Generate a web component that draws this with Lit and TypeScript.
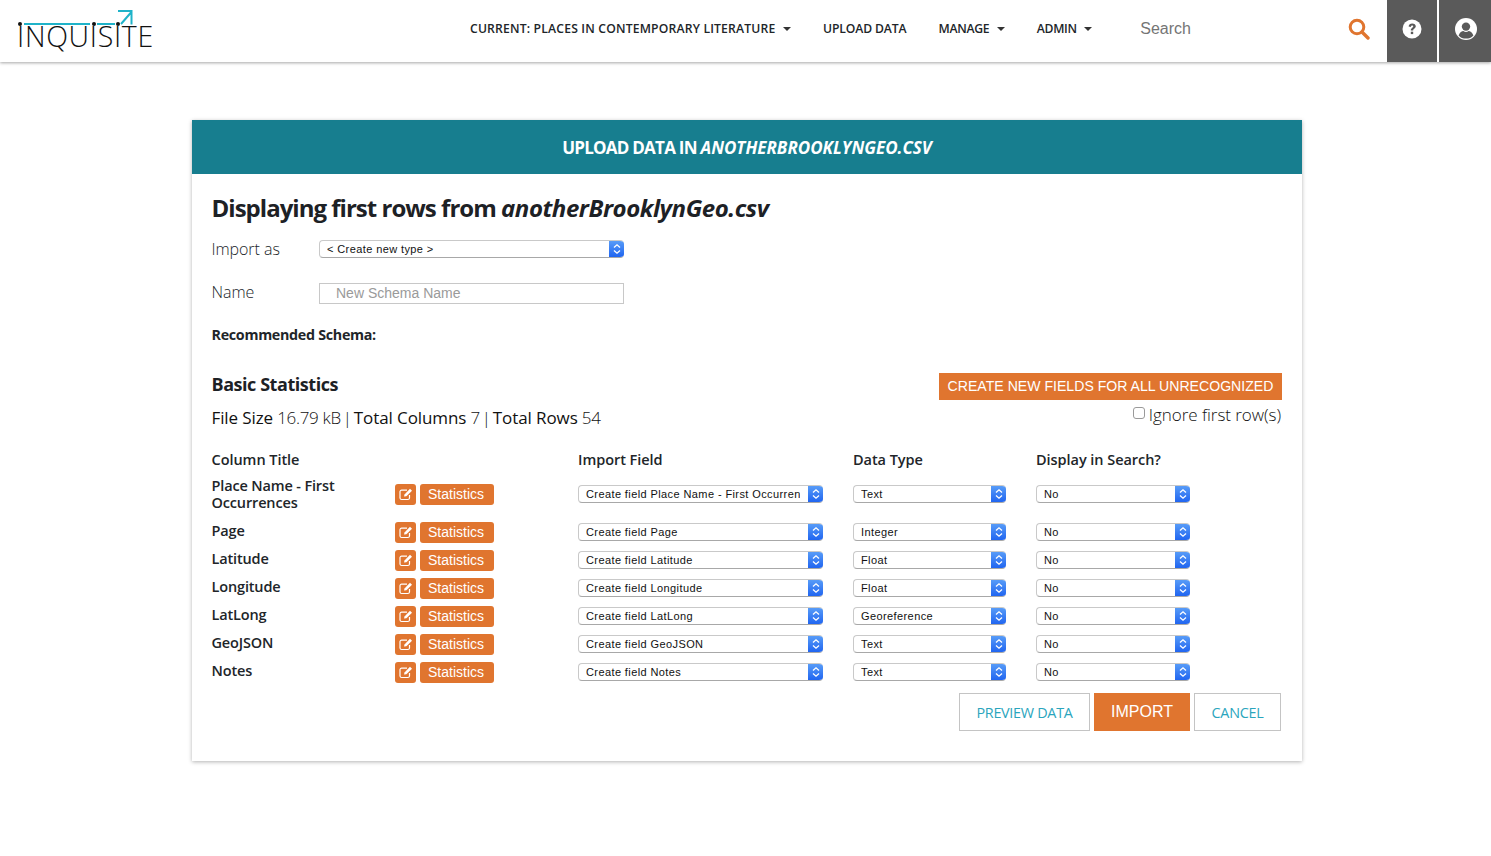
import { LitElement, html, css, svg } from 'lit';
import { customElement } from 'lit/decorators.js';

type Row = { title: string; field: string; type: string };

const rows: Row[] = [
  { title: 'Place Name - First Occurrences', field: 'Create field Place Name - First Occurrences', type: 'Text' },
  { title: 'Page', field: 'Create field Page', type: 'Integer' },
  { title: 'Latitude', field: 'Create field Latitude', type: 'Float' },
  { title: 'Longitude', field: 'Create field Longitude', type: 'Float' },
  { title: 'LatLong', field: 'Create field LatLong', type: 'Georeference' },
  { title: 'GeoJSON', field: 'Create field GeoJSON', type: 'Text' },
  { title: 'Notes', field: 'Create field Notes', type: 'Text' },
];

const chevrons = svg`<svg width="8" height="12" viewBox="0 0 8 12" fill="none" stroke="#fff" stroke-width="1.3"><path d="M1 4.5 L4 1.8 L7 4.5"/><path d="M1 7.5 L4 10.2 L7 7.5"/></svg>`;

const editIcon = svg`<svg width="14" height="14" viewBox="0 0 14 14" fill="none" stroke="#fff" stroke-width="1.2"><path d="M10.5 8 V11 A1.6 1.6 0 0 1 8.9 12.5 H2.6 A1.6 1.6 0 0 1 1 11 V4.8 A1.6 1.6 0 0 1 2.6 3.2 H8"/><path d="M5 9.6 L5.5 7.4 L11 1.8 L13 3.8 L7.4 9.2 Z" fill="#fff" stroke="none"/></svg>`;

@customElement('app-root')
export class AppRoot extends LitElement {
  static styles = css`
    :host {
      display: block;
      min-height: 856px;
      background: #fff;
      font-family: 'Open Sans', 'Noto Sans', sans-serif;
      color: #212529;
    }
    .nav {
      height: 62px;
      display: flex;
      align-items: stretch;
      box-shadow: 0 1px 3px rgba(0, 0, 0, 0.35);
      position: relative;
      background: #fff;
    }
    .logo {
      position: relative;
      width: 470px;
      flex: none;
    }
    .logo span {
      position: absolute;
      left: 17px;
      top: 18px;
      font: 300 28.5px/36px 'Open Sans', sans-serif;
      letter-spacing: 0.7px;
      color: #111;
    }
    .logo svg {
      position: absolute;
      left: 0;
      top: 0;
    }
    .menu {
      display: flex;
      align-items: center;
      font: 600 12.2px/16px 'Open Sans', sans-serif;
      color: #212529;
      height: 58px;
    }
    .menu-item {
      display: flex;
      align-items: center;
      margin-right: 32px;
      white-space: nowrap;
      letter-spacing: -0.3px;
    }
    .menu-item.current {
      letter-spacing: 0.17px;
    }
    .menu-item.upload {
      letter-spacing: -0.12px;
    }
    .caret {
      width: 0;
      height: 0;
      margin-left: 7.5px;
      border-left: 4px solid transparent;
      border-right: 4px solid transparent;
      border-top: 4px solid #333;
    }
    .search {
      margin-left: 16px;
      flex: 1;
      display: flex;
      align-items: center;
      height: 58px;
      font: 16px 'Liberation Sans', sans-serif;
      color: #757575;
    }
    .search-icon {
      margin-left: auto;
      margin-right: 17px;
      display: block;
    }
    .dark {
      background: #5a5a5a;
      display: flex;
      align-items: center;
      justify-content: center;
      padding-bottom: 4px;
      box-sizing: border-box;
    }
    .help {
      width: 50px;
      margin-right: 2px;
    }
    .user {
      width: 52px;
      padding-left: 2px;
    }
    .card {
      width: 1110px;
      height: 641px;
      margin: 58px 0 0 192px;
      box-shadow: 0 1px 4px rgba(0, 0, 0, 0.3);
      background: #fff;
    }
    .card-head {
      height: 54px;
      background: #177e8f;
      color: #fff;
      display: flex;
      align-items: center;
      justify-content: center;
      font: 700 17px/24px 'Open Sans', sans-serif;
      letter-spacing: -0.75px;
      padding-top: 1px;
      box-sizing: border-box;
    }
    .card-head em {
      letter-spacing: 0;
    }
    .body {
      padding: 0 20px 0 19.5px;
    }
    h1 {
      margin: 0;
      padding-top: 17px;
      font: 700 24px/34px 'Open Sans', sans-serif;
      letter-spacing: -0.98px;
      color: #1d2125;
    }
    h1 em {
      letter-spacing: -0.45px;
    }
    .form-row {
      display: grid;
      grid-template-columns: 107.5px 305px;
      align-items: center;
    }
    .form-row.first {
      margin-top: 14px;
    }
    .form-row.second {
      margin-top: 24px;
    }
    .form-row.second .form-label {
      line-height: 17px;
      padding-bottom: 3px;
    }
    .form-label {
      font-size: 16px;
      font-weight: 300;
      line-height: 20px;
      letter-spacing: -0.05px;
    }
    .select {
      height: 18px;
      box-sizing: border-box;
      display: flex;
      align-items: stretch;
      border: 1px solid #c9c9c9;
      border-bottom-color: #a8a8a8;
      border-right: none;
      border-radius: 4px;
      background: #fff;
      font: 11px/16px 'Liberation Sans', sans-serif;
      letter-spacing: 0.4px;
      color: #111;
      overflow: hidden;
    }
    .select-text {
      flex: 1;
      min-width: 0;
      margin-left: 7px;
      margin-right: 8px;
      overflow: hidden;
      white-space: nowrap;
    }
    .select-btn {
      width: 15px;
      flex: none;
      margin: -1px 0;
      display: flex;
      align-items: center;
      justify-content: center;
      background: linear-gradient(#5b9ff8, #1d62f0);
    }
    .input {
      height: 21px;
      box-sizing: border-box;
      border: 1px solid #c8c8c8;
      padding-left: 16px;
      font: 14px/19px 'Liberation Sans', sans-serif;
      color: #9a9a9a;
    }
    .rec {
      margin-top: 21px;
      font-size: 14.3px;
      font-weight: 700;
      line-height: 20px;
      letter-spacing: -0.3px;
    }
    .stats {
      margin-top: 26px;
      display: flex;
      justify-content: space-between;
    }
    h2 {
      margin: 0;
      font: 700 18px/26px 'Open Sans', sans-serif;
      letter-spacing: -0.45px;
      color: #1d2125;
    }
    .totals {
      margin-top: 9px;
      font-size: 17px;
      line-height: 24px;
      font-weight: 300;
      letter-spacing: -0.32px;
      color: #111;
    }
    .totals b {
      font-weight: 400;
      letter-spacing: -0.1px;
    }
    .sep {
      margin: 0 -2px;
    }
    .create {
      height: 27px;
      width: 343px;
      background: #e0752f;
      color: #fff;
      font: 14.1px/27px 'Liberation Sans', sans-serif;
      text-align: center;
    }
    .right {
      display: flex;
      flex-direction: column;
      align-items: flex-end;
      margin-top: 2px;
    }
    .ignore {
      display: flex;
      align-items: center;
      margin-top: 3px;
      padding-right: 1px;
      font-size: 17px;
      font-weight: 300;
      line-height: 23px;
      letter-spacing: -0.05px;
      color: #111;
    }
    .check {
      width: 12px;
      height: 12px;
      box-sizing: border-box;
      border: 1px solid #9a9a9a;
      border-radius: 3px;
      margin: -3px 4px 0 0;
    }
    .table {
      margin-top: 20px;
      display: grid;
      grid-template-columns: 183.5px 183px 275px 183px 154px;
      align-items: center;
    }
    .th {
      font-size: 14.5px;
      font-weight: 600;
      line-height: 20px;
      letter-spacing: -0.05px;
    }
    .title {
      font-size: 14.5px;
      font-weight: 600;
      line-height: 17px;
      letter-spacing: -0.15px;
      padding-right: 30px;
      padding-bottom: 3px;
      color: #212529;
    }
    .title.multi {
      padding-bottom: 0;
    }
    .cell {
      height: 28px;
      display: flex;
      align-items: center;
    }
    .cell.multi {
      height: 48px;
    }
    .actions {
      gap: 4px;
    }
    .btn {
      height: 21px;
      background: #e0752f;
      border-radius: 3px;
      color: #fff;
      display: flex;
      align-items: center;
      justify-content: center;
    }
    .btn.icon {
      width: 21px;
    }
    .btn.stat {
      width: 72px;
      padding-right: 2px;
      font: 14px/21px 'Liberation Sans', sans-serif;
    }
    .w245 {
      width: 245px;
    }
    .w153 {
      width: 153px;
    }
    .w154 {
      width: 154px;
    }
    .w305 {
      width: 305px;
    }
    .footer {
      margin-top: 7px;
      display: flex;
      justify-content: flex-end;
      gap: 4px;
      padding-right: 1px;
    }
    .ghost,
    .primary {
      height: 38px;
      box-sizing: border-box;
      display: flex;
      align-items: center;
      justify-content: center;
    }
    .ghost {
      border: 1px solid #c4c4c4;
      color: #2aa5bd;
      font-size: 14.4px;
      font-weight: 500;
      letter-spacing: -0.3px;
    }
    .primary {
      width: 96px;
      background: #e0752f;
      color: #fff;
      font: 16px 'Liberation Sans', sans-serif;
    }
    .preview {
      width: 131px;
    }
    .cancel {
      width: 87px;
    }
  `;

  private renderSelect(label: string, width: string) {
    return html`<div class="select ${width}">
      <div class="select-text">${label}</div>
      <div class="select-btn">${chevrons}</div>
    </div>`;
  }

  private renderRow(row: Row, i: number) {
    const multi = i === 0;
    return html`
      <div class="title ${multi ? 'multi' : ''}">${row.title}</div>
      <div class="cell actions ${multi ? 'multi' : ''}">
        <div class="btn icon">${editIcon}</div>
        <div class="btn stat">Statistics</div>
      </div>
      <div class="cell ${multi ? 'multi' : ''}">${this.renderSelect(row.field, 'w245')}</div>
      <div class="cell ${multi ? 'multi' : ''}">${this.renderSelect(row.type, 'w153')}</div>
      <div class="cell ${multi ? 'multi' : ''}">${this.renderSelect('No', 'w154')}</div>
    `;
  }

  render() {
    return html`
      <div class="nav">
        <div class="logo">
          <span>INQUISITE</span>
          <svg width="160" height="50" viewBox="0 0 160 50">
            <circle cx="20" cy="24" r="2" fill="#111"></circle>
            <circle cx="94" cy="24" r="2" fill="#111"></circle>
            <circle cx="118" cy="24" r="2" fill="#111"></circle>
            <path d="M24 24 H90 M97 24 H115 M121 24 L131 12.5 M118 11 H131.5 V24.5" fill="none" stroke="#1fb3c9" stroke-width="2"></path>
          </svg>
        </div>
        <div class="menu">
          <div class="menu-item current">CURRENT: PLACES IN CONTEMPORARY LITERATURE<i class="caret"></i></div>
          <div class="menu-item upload">UPLOAD DATA</div>
          <div class="menu-item">MANAGE<i class="caret"></i></div>
          <div class="menu-item">ADMIN<i class="caret"></i></div>
        </div>
        <div class="search">
          Search
          <svg class="search-icon" width="22" height="22" viewBox="0 0 22 22" fill="none" stroke="#e0752f">
            <circle cx="9" cy="9" r="6.8" stroke-width="3"></circle>
            <path d="M14 14 L20 20" stroke-width="3.4" stroke-linecap="round"></path>
          </svg>
        </div>
        <div class="dark help">
          <svg width="20" height="20" viewBox="0 0 20 20">
            <circle cx="10" cy="10" r="9.5" fill="#fff"></circle>
            <path d="M6.6 7.6 C6.8 5.4 8.2 4.4 10.2 4.4 C12.3 4.4 13.8 5.6 13.8 7.3 C13.8 9.6 11.2 9.6 11.2 11.5 H8.8 C8.8 8.8 11.2 8.8 11.2 7.5 C11.2 6.9 10.8 6.5 10.1 6.5 C9.4 6.5 9 7 8.8 8 Z" fill="#5a5a5a"></path>
            <rect x="8.8" y="12.7" width="2.4" height="2.4" fill="#5a5a5a"></rect>
          </svg>
        </div>
        <div class="dark user">
          <svg width="22" height="22" viewBox="0 0 22 22">
            <circle cx="11" cy="11" r="11" fill="#fff"></circle>
            <circle cx="11" cy="8.6" r="4.2" fill="#5a5a5a"></circle>
            <path d="M3.6 17.4 C4.6 14.2 7 13.2 8.4 13 C10 14.2 12 14.2 13.6 13 C15 13.2 17.4 14.2 18.4 17.4 C16.4 19.6 13.8 20.6 11 20.6 C8.2 20.6 5.6 19.6 3.6 17.4 Z" fill="#5a5a5a"></path>
          </svg>
        </div>
      </div>

      <div class="card">
        <div class="card-head"><span>UPLOAD DATA IN <em>ANOTHERBROOKLYNGEO.CSV</em></span></div>
        <div class="body">
          <h1>Displaying first rows from <em>anotherBrooklynGeo.csv</em></h1>
          <div class="form-row first">
            <div class="form-label">Import as</div>
            ${this.renderSelect('< Create new type >', 'w305')}
          </div>
          <div class="form-row second">
            <div class="form-label">Name</div>
            <div class="input">New Schema Name</div>
          </div>
          <div class="rec">Recommended Schema:</div>
          <div class="stats">
            <div>
              <h2>Basic Statistics</h2>
              <div class="totals"><b>File Size</b> 16.79 kB <span class="sep">|</span> <b>Total Columns</b> 7 <span class="sep">|</span> <b>Total Rows</b> 54</div>
            </div>
            <div class="right">
              <div class="create">CREATE NEW FIELDS FOR ALL UNRECOGNIZED</div>
              <div class="ignore"><i class="check"></i>Ignore first row(s)</div>
            </div>
          </div>
          <div class="table">
            <div class="th">Column Title</div>
            <div class="th"></div>
            <div class="th">Import Field</div>
            <div class="th">Data Type</div>
            <div class="th">Display in Search?</div>
            ${rows.map((r, i) => this.renderRow(r, i))}
          </div>
          <div class="footer">
            <div class="ghost preview">PREVIEW DATA</div>
            <div class="primary">IMPORT</div>
            <div class="ghost cancel">CANCEL</div>
          </div>
        </div>
      </div>
    `;
  }
}
